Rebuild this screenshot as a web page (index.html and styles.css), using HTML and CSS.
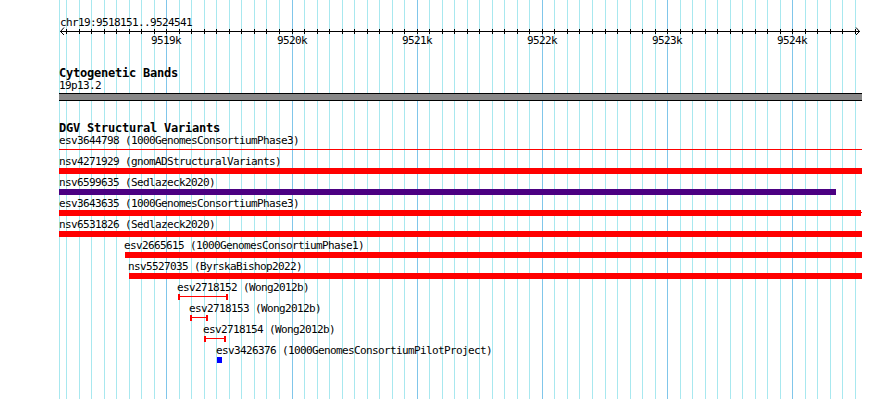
FILE: index.html
```html
<!DOCTYPE html>
<html lang="en">
<head>
    <meta charset="UTF-8">
    <title>chr19:9518151-9524541</title>
    <link rel="stylesheet" href="styles.css">
</head>
<body>
    <div id="browser">
        <svg id="guides" width="890" height="399"></svg>

        <div id="ruler">
            <div class="position">chr19:9518151..9524541</div>
            <svg id="axis" width="890" height="8"></svg>
            <div id="tick-labels"></div>
        </div>

        <div class="track">
            <div class="track-title">Cytogenetic Bands</div>
            <div class="band-label">19p13.2</div>
            <div class="band"></div>
        </div>

        <div class="track">
            <div class="track-title">DGV Structural Variants</div>
            <div class="feature">
                <div class="label" style="margin-left:59px">esv3644798 (1000GenomesConsortiumPhase3)</div>
                <div class="glyph line" style="margin-left:59px;width:803px"></div>
            </div>
            <div class="feature">
                <div class="label" style="margin-left:59px">nsv4271929 (gnomADStructuralVariants)</div>
                <div class="glyph red" style="margin-left:59px;width:803px"></div>
            </div>
            <div class="feature">
                <div class="label" style="margin-left:59px">nsv6599635 (Sedlazeck2020)</div>
                <div class="glyph purple" style="margin-left:59px;width:777px"></div>
            </div>
            <div class="feature">
                <div class="label" style="margin-left:59px">esv3643635 (1000GenomesConsortiumPhase3)</div>
                <div class="glyph stub" style="margin-left:59px;width:803px"></div>
            </div>
            <div class="feature">
                <div class="label" style="margin-left:59px">nsv6531826 (Sedlazeck2020)</div>
                <div class="glyph red" style="margin-left:59px;width:803px"></div>
            </div>
            <div class="feature">
                <div class="label" style="margin-left:124px">esv2665615 (1000GenomesConsortiumPhase1)</div>
                <div class="glyph red" style="margin-left:125px;width:737px"></div>
            </div>
            <div class="feature">
                <div class="label" style="margin-left:128px">nsv5527035 (ByrskaBishop2022)</div>
                <div class="glyph red" style="margin-left:129px;width:733px"></div>
            </div>
            <div class="feature">
                <div class="label" style="margin-left:177px">esv2718152 (Wong2012b)</div>
                <div class="glyph whisker" style="margin-left:178px;width:50px"></div>
            </div>
            <div class="feature">
                <div class="label" style="margin-left:189px">esv2718153 (Wong2012b)</div>
                <div class="glyph whisker" style="margin-left:190px;width:18px"></div>
            </div>
            <div class="feature">
                <div class="label" style="margin-left:203px">esv2718154 (Wong2012b)</div>
                <div class="glyph whisker" style="margin-left:204px;width:22px"></div>
            </div>
            <div class="feature">
                <div class="label" style="margin-left:216px">esv3426376 (1000GenomesConsortiumPilotProject)</div>
                <div class="glyph blue" style="margin-left:217px;width:5px"></div>
            </div>
        </div>
    </div>

    <script>
        // pixel position of a base on chr19 in this window
        function bpToX(bp) {
            return Math.round(166.3 + (bp - 9519000) * 0.1252);
        }

        function drawRuler() {
            const guides = document.getElementById('guides');
            const axis = document.getElementById('axis');
            const labels = document.getElementById('tick-labels');

            let guideLines = '<line class="guide" x1="59.5" y1="0" x2="59.5" y2="399"/>';
            let axisLines = '<line x1="60" y1="4.5" x2="860" y2="4.5"/>' +
                '<polyline points="64,0.5 60.5,4.5 64,8"/>' +
                '<polyline points="856,0.5 859.5,4.5 856,8"/>';

            for (let bp = 9518200; bp <= 9524500; bp += 100) {
                const x = bpToX(bp) + 0.5;
                const major = bp % 1000 === 0;
                guideLines += `<line class="${major ? 'guide major' : 'guide'}" x1="${x}" y1="0" x2="${x}" y2="399"/>`;
                axisLines += `<line x1="${x}" y1="2" x2="${x}" y2="7"/>`;
                if (major) {
                    const tick = document.createElement('span');
                    tick.textContent = (bp / 1000) + 'k';
                    tick.style.left = bpToX(bp) + 'px';
                    labels.appendChild(tick);
                }
            }

            guides.innerHTML = guideLines;
            axis.innerHTML = axisLines;
        }

        drawRuler();
    </script>
</body>
</html>
```

FILE: styles.css
```css
body {
    margin: 0;
    background: #fff;
    color: #000;
    font-family: "DejaVu Sans Mono", "Liberation Mono", monospace;
    font-size: 11px;
    letter-spacing: -0.62px;
}
#browser {
    position: relative;
    width: 890px;
    height: 399px;
    overflow: hidden;
}
#guides {
    position: absolute;
    left: 0;
    top: 0;
}
#guides .guide {
    stroke: #a8e8ef;
    stroke-width: 1;
}
#guides .guide.major {
    stroke: #80c6ea;
}
#ruler {
    position: relative;
    padding-top: 17px;
}
.position {
    height: 10px;
    line-height: 11px;
    margin-left: 60px;
    white-space: nowrap;
}
#axis {
    display: block;
}
#axis line,
#axis polyline {
    stroke: #000;
    stroke-width: 1;
    fill: none;
    shape-rendering: crispEdges;
}
#axis polyline {
    shape-rendering: auto;
}
#tick-labels {
    position: relative;
    height: 11px;
    line-height: 11px;
}
#tick-labels span {
    position: absolute;
    top: 0;
    transform: translateX(-50%);
    white-space: nowrap;
}
.track {
    position: relative;
    margin-top: 21px;
}
.track-title {
    height: 12px;
    line-height: 12px;
    margin: 0 0 1px 59px;
    font-size: 12px;
    font-weight: bold;
    letter-spacing: -0.22px;
    white-space: nowrap;
}
.band-label {
    height: 11px;
    line-height: 11px;
    margin-left: 59px;
}
.band {
    margin: 2px 0 0 59px;
    width: 803px;
    height: 6px;
    border-top: 1px solid #000;
    border-bottom: 1px solid #000;
    background: #888;
}
.feature {
    height: 21px;
}
.feature .label {
    height: 11px;
    line-height: 11px;
    white-space: nowrap;
}
.glyph {
    margin-top: 1px;
    height: 6px;
    box-sizing: border-box;
}
.glyph.red {
    background: #f00;
}
.glyph.purple {
    background: #4b0082;
}
.glyph.blue {
    background: #00f;
}
.glyph.line {
    background: linear-gradient(#f00, #f00) 0 2px / 100% 1px no-repeat;
}
.glyph.stub {
    background:
        linear-gradient(#f00, #f00) 0 0 / calc(100% - 1px) 100% no-repeat,
        linear-gradient(#f00, #f00) 0 2px / 100% 1px no-repeat;
}
.glyph.whisker {
    border-left: 2px solid #f00;
    border-right: 2px solid #f00;
    background: linear-gradient(#f00, #f00) 0 2px / 100% 1px no-repeat;
}
```
